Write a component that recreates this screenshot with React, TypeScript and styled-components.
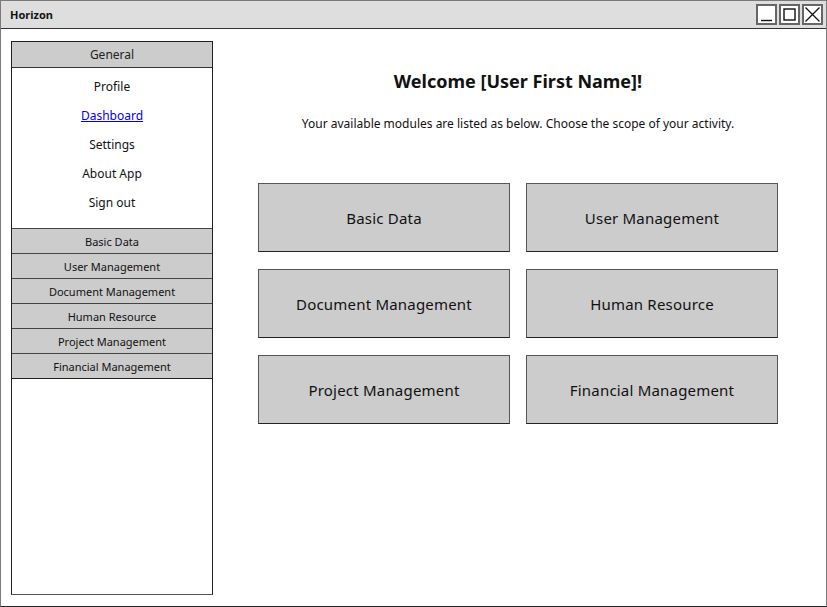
import React from "react";
import styled, { createGlobalStyle } from "styled-components";

const GlobalStyle = createGlobalStyle`
	html, body {
		margin: 0;
		padding: 0;
		background: #ffffff;
	}
	body {
		font-family: "Noto Sans", "DejaVu Sans", sans-serif;
		color: #111;
	}
`;

const sideLinks = [
	{ label: "Profile" },
	{ label: "Dashboard", active: true },
	{ label: "Settings" },
	{ label: "About App" },
	{ label: "Sign out" },
];

const modules = [
	"Basic Data",
	"User Management",
	"Document Management",
	"Human Resource",
	"Project Management",
	"Financial Management",
];

function App() {
	return (
		<>
			<GlobalStyle />
			<Window>
				<TitleBar>
					<Title>Horizon</Title>
					<Controls>
						<ControlButton aria-label="minimize">
							<svg width="17" height="17" viewBox="0 0 17 17">
								<path d="M3 14.5 H14" stroke="#111" strokeWidth="1.4" fill="none" />
							</svg>
						</ControlButton>
						<ControlButton aria-label="maximize">
							<svg width="17" height="17" viewBox="0 0 17 17">
								<rect x="3" y="3" width="11" height="11" stroke="#111" strokeWidth="1.4" fill="none" />
							</svg>
						</ControlButton>
						<ControlButton aria-label="close">
							<svg width="17" height="17" viewBox="0 0 17 17">
								<path d="M1.5 1.5 L15.5 15.5 M15.5 1.5 L1.5 15.5" stroke="#111" strokeWidth="1.3" fill="none" />
							</svg>
						</ControlButton>
					</Controls>
				</TitleBar>
				<Body>
					<Sidebar>
						<SectionHeader>General</SectionHeader>
						<LinkList>
							{sideLinks.map((link) => (
								<LinkItem key={link.label} $active={link.active}>
									{link.label}
								</LinkItem>
							))}
						</LinkList>
						<Accordion>
							{modules.map((m) => (
								<AccordionBar key={m}>{m}</AccordionBar>
							))}
						</Accordion>
					</Sidebar>
					<Main>
						<Heading>Welcome [User First Name]!</Heading>
						<Intro>
							Your available modules are listed as below. Choose the scope of your activity.
						</Intro>
						<ModuleGrid>
							{modules.map((m) => (
								<ModuleCard key={m}>{m}</ModuleCard>
							))}
						</ModuleGrid>
					</Main>
				</Body>
			</Window>
		</>
	);
}

export default App;

const Window = styled.div`
	width: 827px;
	height: 607px;
	box-sizing: border-box;
	border: 1px solid #7a7a7a;
	border-bottom-color: #222;
	display: flex;
	flex-direction: column;
	background: #fff;
`;

const TitleBar = styled.div`
	height: 28px;
	box-sizing: border-box;
	background: #dedede;
	border-bottom: 1px solid #333;
	display: flex;
	align-items: center;
	justify-content: space-between;
	padding: 0 3px 0 9px;
`;

const Title = styled.div`
	font-size: 11px;
	font-weight: bold;
	color: #111;
`;

const Controls = styled.div`
	display: flex;
	gap: 2px;
	align-items: center;
`;

const ControlButton = styled.div`
	width: 21px;
	height: 21px;
	box-sizing: border-box;
	border: 2px solid #666;
	background: #fff;
	display: flex;
	align-items: center;
	justify-content: center;
`;

const Body = styled.div`
	flex: 1;
	display: flex;
	padding: 12px 0 11px 10px;
	min-height: 0;
`;

const Sidebar = styled.div`
	width: 202px;
	box-sizing: border-box;
	border: 1px solid #222;
	border-bottom-color: #555;
	display: flex;
	flex-direction: column;
	background: #fff;
`;

const SectionHeader = styled.div`
	height: 26px;
	box-sizing: border-box;
	background: #cccccc;
	border-bottom: 1px solid #333;
	display: flex;
	align-items: center;
	justify-content: center;
	font-size: 12px;
	color: #222;
`;

const LinkList = styled.div`
	display: flex;
	flex-direction: column;
	padding-top: 4px;
	margin-bottom: 11px;
`;

const LinkItem = styled.div<{ $active?: boolean }>`
	height: 29px;
	display: flex;
	align-items: center;
	justify-content: center;
	font-size: 12px;
	color: ${(p) => (p.$active ? "#0000ee" : "#111")};
	text-decoration: ${(p) => (p.$active ? "underline" : "none")};
`;

const Accordion = styled.div`
	display: flex;
	flex-direction: column;
`;

const AccordionBar = styled.div`
	height: 26px;
	box-sizing: border-box;
	background: #cccccc;
	border-top: 1px solid #444;
	border-bottom: 1px solid #222;
	margin-top: -1px;
	display: flex;
	align-items: center;
	justify-content: center;
	font-size: 11px;
	color: #111;

	&:first-child {
		margin-top: 0;
	}
`;

const Main = styled.div`
	flex: 1;
	display: flex;
	flex-direction: column;
	align-items: center;
	padding-top: 28px;
	padding-right: 3px;
`;

const Heading = styled.h1`
	margin: 0;
	font-size: 18px;
	line-height: 24px;
	font-weight: bold;
	color: #111;
`;

const Intro = styled.p`
	margin: 23px 0 0;
	font-size: 12px;
	line-height: 16px;
	color: #111;
`;

const ModuleGrid = styled.div`
	margin-top: 51px;
	display: grid;
	grid-template-columns: 252px 252px;
	grid-auto-rows: 69px;
	column-gap: 16px;
	row-gap: 17px;
`;

const ModuleCard = styled.div`
	box-sizing: border-box;
	background: #cccccc;
	border: 1.5px solid #555;
	border-bottom-color: #222;
	display: flex;
	align-items: center;
	justify-content: center;
	font-size: 15px;
	color: #111;
	letter-spacing: 0.2px;
`;
